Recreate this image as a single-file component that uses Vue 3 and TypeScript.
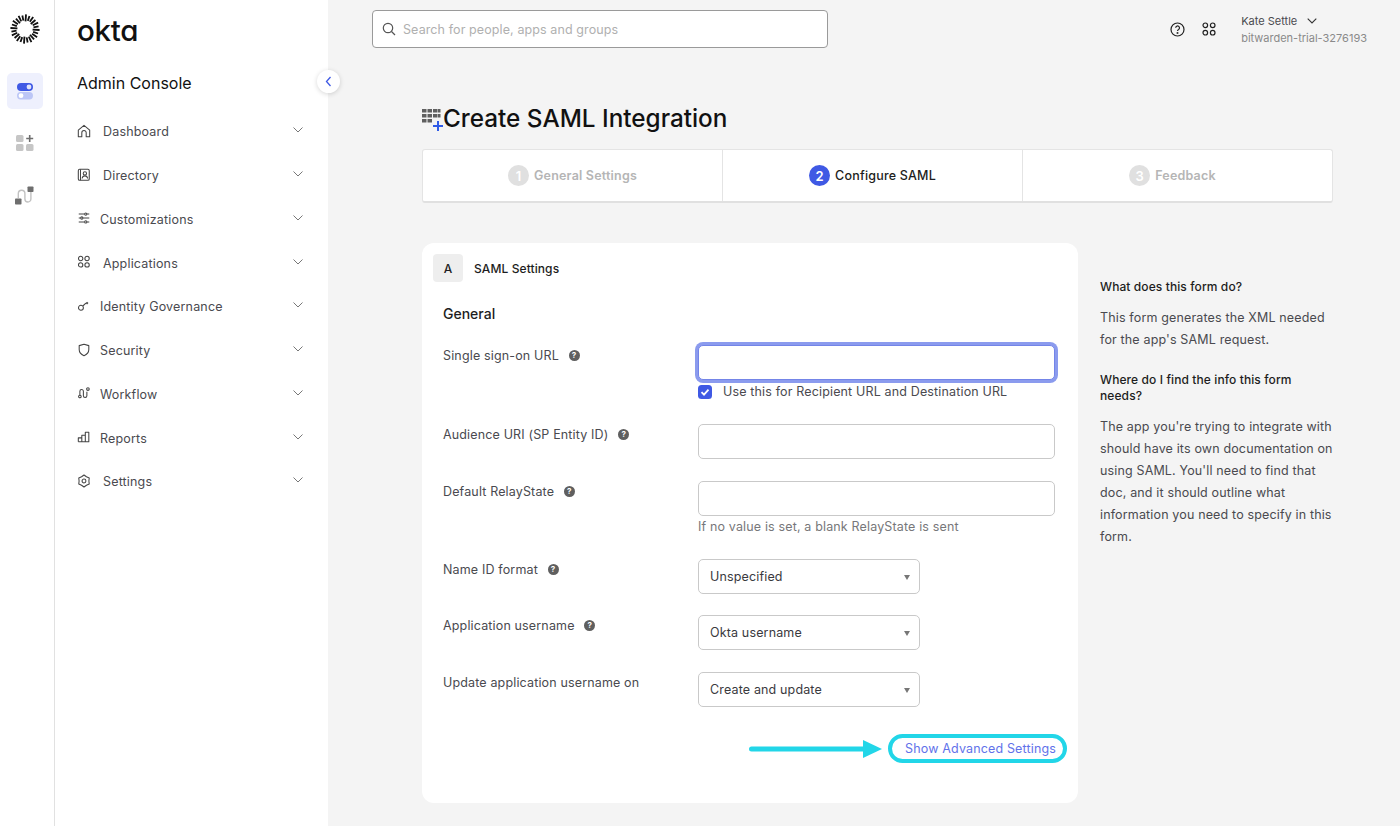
<script setup lang="ts">
interface NavItem { label: string; icon: string; gap: number }
const nav: NavItem[] = [
  { label: 'Dashboard', icon: 'home', gap: 12 },
  { label: 'Directory', icon: 'dir', gap: 12 },
  { label: 'Customizations', icon: 'sliders', gap: 9 },
  { label: 'Applications', icon: 'apps', gap: 12 },
  { label: 'Identity Governance', icon: 'key', gap: 9 },
  { label: 'Security', icon: 'shield', gap: 9 },
  { label: 'Workflow', icon: 'flow', gap: 9 },
  { label: 'Reports', icon: 'reports', gap: 9 },
  { label: 'Settings', icon: 'gear', gap: 12 },
]
const rays = Array.from({ length: 24 }, (_, i) => i * 15 + 4)
const gear = (() => {
  const pts: string[] = []
  for (let i = 0; i < 12; i++) {
    const a = (i * 30 * Math.PI) / 180
    const r = i % 2 === 0 ? 6.9 : 5.6
    pts.push(`${(8 + r * Math.sin(a)).toFixed(2)} ${(8 - r * Math.cos(a)).toFixed(2)}`)
  }
  return 'M' + pts.join('L') + 'Z'
})()
const steps = [
  { n: 1, label: 'General Settings', active: false },
  { n: 2, label: 'Configure SAML', active: true },
  { n: 3, label: 'Feedback', active: false },
]
</script>

<template>
  <div class="page">
    <aside class="rail">
      <svg class="logo" width="30" height="30" viewBox="0 0 30 30">
        <line v-for="(r, i) in rays" :key="r" x1="15" :y1="i % 2 ? 1.2 : 0.4" x2="15" :y2="i % 3 === 0 ? 7.4 : 6.4" stroke="#111" stroke-width="1.8" :transform="`rotate(${r} 15 15)`" />
      </svg>
      <div class="rail-btn active">
        <svg width="18" height="20" viewBox="0 0 18 20">
          <rect x="1" y="2" width="16" height="8" rx="4" fill="#3f59e4" />
          <circle cx="13" cy="6" r="2.4" fill="#dfe3fb" />
          <rect x="1" y="11" width="16" height="7.5" rx="3.7" fill="#bcc6f6" />
          <circle cx="5" cy="14.7" r="2.4" fill="#fff" />
        </svg>
      </div>
      <svg class="rail-ic first" width="18" height="18" viewBox="0 0 18 18">
        <rect x="0" y="1" width="7.5" height="7" rx="1.5" fill="#c6c6c6" />
        <rect x="0" y="10" width="7.5" height="7" rx="1.5" fill="#c6c6c6" />
        <rect x="10" y="10" width="7.5" height="7" rx="1.5" fill="#c6c6c6" />
        <path d="M13.7 1v7M10.2 4.5h7" stroke="#6e6e6e" stroke-width="1.6" />
      </svg>
      <svg class="rail-ic" width="20" height="20" viewBox="0 0 20 20">
        <rect x="0" y="12.5" width="6.5" height="6" rx=".8" fill="#6e6e6e" />
        <rect x="12.5" y="0.5" width="6" height="5.5" rx=".8" fill="#6e6e6e" />
        <path d="M3.3 12V7.5a3.3 3.3 0 0 1 6.6 0v5.5a3 3 0 0 0 6 0V6" fill="none" stroke="#c2c2c2" stroke-width="1.4" />
      </svg>
    </aside>

    <aside class="side">
      <div class="okta">okta</div>
      <div class="console">Admin Console</div>
      <nav class="nav">
        <div v-for="item in nav" :key="item.label" class="nav-item">
          <svg class="nav-ic" width="14" height="14" viewBox="0 0 16 16" fill="none" stroke="#444" stroke-width="1.2">
            <template v-if="item.icon === 'home'">
              <path d="M1.5 7 8 1.5 14.5 7v7.5h-4V10a2.5 2.5 0 0 0-5 0v4.5h-4z" stroke-linejoin="round" />
            </template>
            <template v-else-if="item.icon === 'dir'">
              <rect x="1.5" y="1.5" width="12.5" height="12.5" rx="1.5" />
              <path d="M4 1.5v12.5" />
              <circle cx="9" cy="6.2" r="1.9" />
              <path d="M5.8 12c.4-2 1.6-3 3.2-3s2.8 1 3.2 3" />
            </template>
            <template v-else-if="item.icon === 'sliders'">
              <path d="M2 3.5h6.5M11.5 3.5h2.5M2 8h2M7 8h7M2 12.5h6.5M11.5 12.5h2.5" />
              <circle cx="10" cy="3.5" r="1.3" /><circle cx="5.5" cy="8" r="1.3" /><circle cx="10" cy="12.5" r="1.3" />
            </template>
            <template v-else-if="item.icon === 'apps'">
              <circle cx="4.2" cy="4" r="2.5" /><circle cx="11.5" cy="4" r="2.5" /><circle cx="4.2" cy="11.3" r="2.5" /><circle cx="11.5" cy="11.3" r="2.5" />
            </template>
            <template v-else-if="item.icon === 'key'">
              <circle cx="4.5" cy="10" r="2.8" />
              <path d="m6.6 8 3.6-3.4" />
              <path d="m11.5 3 1.6 1.6-1.6 1.6-1.6-1.6z" fill="#444" stroke="none" />
            </template>
            <template v-else-if="item.icon === 'shield'">
              <path d="M2.5 3 8 1.5 13.5 3v4.5c0 3.3-2.2 5.7-5.5 7-3.3-1.3-5.5-3.7-5.5-7z" stroke-linejoin="round" />
            </template>
            <template v-else-if="item.icon === 'flow'">
              <circle cx="3.3" cy="12" r="1.5" /><circle cx="12.5" cy="3.5" r="1.5" />
              <path d="M3.3 10.5V6a2 2 0 0 1 4 0v5a2 2 0 0 0 4 0V6.5" />
            </template>
            <template v-else-if="item.icon === 'reports'">
              <path d="M1.5 13.5V9h4v4.5M5.5 13.5V6h4v7.5M9.5 13.5V2.5h4v11H1.5" stroke-linejoin="round" />
            </template>
            <template v-else>
              <path :d="gear" stroke-linejoin="round" />
              <circle cx="8" cy="8" r="2.2" />
            </template>
          </svg>
          <span class="nav-label" :style="{ marginLeft: item.gap + 'px' }">{{ item.label }}</span>
          <svg class="chev" width="10" height="6" viewBox="0 0 10 6" fill="none" stroke="#777" stroke-width="1"><path d="m.5.5 4.500 4.500L9.500.5" /></svg>
        </div>
      </nav>
      <div class="collapse">
        <svg width="7" height="11" viewBox="0 0 7 11" fill="none" stroke="#3f59e4" stroke-width="1.3"><path d="M5.500 1 1.500 5.500l4 4.500" /></svg>
      </div>
    </aside>

    <main class="main">
      <header class="top">
        <div class="search">
          <svg width="14" height="14" viewBox="0 0 14 14" fill="none" stroke="#555" stroke-width="1.2"><circle cx="6" cy="6" r="4.7" /><path d="m9.500 9.500 3.500 3.500" /></svg>
          <span>Search for people, apps and groups</span>
        </div>
        <div class="top-right">
          <svg width="15" height="15" viewBox="0 0 15 15" fill="none" stroke="#222" stroke-width="1.2">
            <circle cx="7.5" cy="7.5" r="6.5" />
            <path d="M5.7 5.8a1.9 1.9 0 1 1 2.9 1.7c-.7.4-1.100.8-1.100 1.500" />
            <circle cx="7.5" cy="11" r=".4" />
          </svg>
          <svg class="apps" width="14" height="14" viewBox="0 0 14 14" fill="none" stroke="#222" stroke-width="1.2">
            <circle cx="3.3" cy="3.3" r="2.3" /><circle cx="10.7" cy="3.3" r="2.3" /><circle cx="3.3" cy="10.7" r="2.3" /><circle cx="10.7" cy="10.7" r="2.3" />
          </svg>
          <div class="user">
            <div class="uname">Kate Settle
              <svg width="10" height="6" viewBox="0 0 10 6" fill="none" stroke="#333" stroke-width="1.1"><path d="m.7.7 4.300 4.300L9.300.7" /></svg>
            </div>
            <div class="org">bitwarden-trial-3276193</div>
          </div>
        </div>
      </header>

      <div class="content">
        <h1 class="title">
          <svg width="22" height="23" viewBox="0 0 22 23">
            <g fill="#5f5f5f">
              <rect x="0" y="0" width="4.500" height="3.500" /><rect x="5.500" y="0" width="4.500" height="3.500" /><rect x="11" y="0" width="4.500" height="3.500" /><rect x="16" y="0" width="2.500" height="3.500" />
              <rect x="0" y="5" width="4.500" height="3.500" /><rect x="5.500" y="5" width="4.500" height="3.500" /><rect x="11" y="5" width="4.500" height="3.500" /><rect x="16" y="5" width="2.500" height="3.500" />
              <rect x="0" y="10" width="4.500" height="3.500" /><rect x="5.500" y="10" width="4.500" height="3.500" />
            </g>
            <path d="M16 12v10M11 17h10" stroke="#2f5be7" stroke-width="2" />
          </svg>
          <span>Create SAML Integration</span>
        </h1>

        <div class="wizard">
          <div v-for="s in steps" :key="s.n" class="step" :class="{ on: s.active }">
            <span class="num">{{ s.n }}</span>
            <span>{{ s.label }}</span>
          </div>
        </div>

        <div class="columns">
          <section class="card">
            <div class="card-head">
              <span class="letter">A</span>
              <span class="card-title">SAML Settings</span>
            </div>
            <h2 class="general">General</h2>

            <div class="row r1">
              <div class="lab">Single sign-on URL <i class="q">?</i></div>
              <div class="ctl">
                <div class="input focus"></div>
                <label class="chk">
                  <svg width="14" height="14" viewBox="0 0 14 14"><rect width="14" height="14" rx="3.500" fill="#3f59e4" /><path d="m3.500 7.200 2.500 2.500 4.500-5" fill="none" stroke="#fff" stroke-width="1.800" /></svg>
                  Use this for Recipient URL and Destination URL
                </label>
              </div>
            </div>
            <div class="row r2">
              <div class="lab">Audience URI (SP Entity ID) <i class="q">?</i></div>
              <div class="ctl"><div class="input"></div></div>
            </div>
            <div class="row r3">
              <div class="lab">Default RelayState <i class="q">?</i></div>
              <div class="ctl">
                <div class="input"></div>
                <div class="hint">If no value is set, a blank RelayState is sent</div>
              </div>
            </div>
            <div class="row r4">
              <div class="lab">Name ID format <i class="q">?</i></div>
              <div class="ctl"><div class="select">Unspecified<b class="caret"></b></div></div>
            </div>
            <div class="row r5">
              <div class="lab">Application username <i class="q">?</i></div>
              <div class="ctl"><div class="select">Okta username<b class="caret"></b></div></div>
            </div>
            <div class="row r5">
              <div class="lab">Update application username on</div>
              <div class="ctl"><div class="select">Create and update<b class="caret"></b></div></div>
            </div>

            <div class="adv-row">
              <svg class="arrow" width="134" height="20" viewBox="0 0 134 20">
                <path d="M2.500 10h116" stroke="#22d6e8" stroke-width="5" stroke-linecap="round" />
                <path d="M114 1l19 9-19 9z" fill="#22d6e8" />
              </svg>
              <a class="adv">Show Advanced Settings</a>
            </div>
          </section>

          <aside class="help">
            <h3>What does this form do?</h3>
            <p>This form generates the XML needed for the app's SAML request.</p>
            <h3>Where do I find the info this form needs?</h3>
            <p>The app you're trying to integrate with should have its own documentation on using SAML. You'll need to find that doc, and it should outline what information you need to specify in this form.</p>
          </aside>
        </div>
      </div>
    </main>
  </div>
</template>

<style>
html, body { margin: 0; height: 100%; background: #f4f4f4; }
</style>

<style scoped>
.page { display: flex; height: 826px; overflow: hidden; font-family: Inter, "Liberation Sans", sans-serif; color: #1d1d21; background: #f4f4f4; }
.rail { width: 54px; flex: none; background: #fff; border-right: 1px solid #e1e1e1; display: flex; flex-direction: column; align-items: center; }
.logo { margin-top: 14px; margin-left: -5px; }
.rail-btn { width: 36px; height: 36px; margin-top: 29px; margin-left: -5px; border-radius: 5px; background: #eef0fd; display: flex; align-items: center; justify-content: center; }
.rail-ic { margin-left: -5px; margin-top: 34px; }
.rail-ic.first { margin-top: 25px; }
.side { width: 273px; flex: none; background: #fff; position: relative; box-sizing: border-box; padding-left: 22px; }
.okta { font-size: 29.5px; font-weight: 500; line-height: 36px; margin-top: 12px; letter-spacing: -0.3px; color: #111; font-feature-settings: "cv11"; }
.console { font-size: 16px; font-weight: 400; line-height: 20px; margin-top: 25px; color: #111; }
.nav { margin-top: 17px; }
.nav-item { height: 43.75px; display: flex; align-items: center; font-size: 12.5px; letter-spacing: 0.17px; color: #4a4a4f; padding-right: 25px; }
.nav-ic { flex: none; margin-top: -2px; }
.nav-label { flex: 1; }
.chev { margin-top: -3px; }
.collapse { position: absolute; right: -12px; top: 70px; width: 23px; height: 23px; border-radius: 50%; background: #fff; box-shadow: 0 1px 5px rgba(0,0,0,.16); display: flex; align-items: center; justify-content: center; }
.main { flex: 1; min-width: 0; display: flex; flex-direction: column; }
.top { height: 58px; display: flex; align-items: flex-start; padding: 10px 33px 0 44px; justify-content: space-between; }
.search { width: 456px; height: 38px; box-sizing: border-box; background: #fff; border: 1px solid #9a9a9a; border-radius: 4px; display: flex; align-items: center; gap: 7px; padding-left: 9px; font-size: 12.5px; letter-spacing: .1px; color: #b0b0b0; }
.top-right { display: flex; align-items: center; height: 38px; }
.apps { margin-left: 17px; }
.user { margin-left: 25px; font-size: 11px; line-height: 17px; margin-top: 1px; }
.uname { color: #4a4a4f; display: flex; align-items: center; gap: 10px; }
.org { color: #8a8a8a; }
.content { padding: 0 67px 0 94px; }
.title { margin: 33px 0 0; height: 34px; display: flex; align-items: center; font-size: 24.3px; font-weight: 500; color: #111; line-height: 34px; }
.title svg { margin-right: -1px; margin-top: 5px; }
.wizard { margin-top: 14px; height: 54px; box-sizing: border-box; display: flex; background: #fff; border: 1px solid #e4e4e4; border-bottom: 2px solid #e0e0e0; border-radius: 3px; }
.step { flex: 0 0 300px; box-sizing: border-box; display: flex; align-items: center; justify-content: center; gap: 5px; font-size: 12.5px; font-weight: 600; color: #b5b5b5; letter-spacing: .2px; }
.step:first-child { flex-basis: 299px; }
.step + .step { border-left: 1px solid #e4e4e4; }
.step.on { color: #1d1d21; font-weight: 500; }
.num { width: 21px; height: 21px; border-radius: 50%; background: #e0e0e0; color: #fff; display: flex; align-items: center; justify-content: center; font-size: 13px; font-weight: 600; }
.on .num { background: #3f59e4; }
.columns { display: flex; margin-top: 40px; gap: 22px; }
.card { width: 656px; height: 560px; flex: none; box-sizing: border-box; background: #fff; border-radius: 12px; padding: 11px 11px 0 21px; }
.card-head { display: flex; align-items: center; margin-left: -10px; height: 28px; }
.letter { width: 30px; height: 28px; background: #eeeeee; border-radius: 4px; display: flex; align-items: center; justify-content: center; font-size: 12px; font-weight: 500; }
.card-title { margin-left: 11px; font-size: 12px; font-weight: 500; letter-spacing: .1px; }
.general { margin: 22px 0 0; font-size: 14px; font-weight: 500; line-height: 20px; color: #1d1d21; }
.row { display: flex; }
.r1 { margin-top: 21px; height: 79px; }
.r2 { height: 57px; }
.r3 { height: 78px; }
.r4 { height: 56px; }
.r5 { height: 56.5px; }
.lab { width: 255px; flex: none; font-size: 12.5px; letter-spacing: .15px; color: #4a4a4f; line-height: 22px; display: flex; align-items: flex-start; white-space: pre; }
.q { width: 11px; height: 11px; margin: 5px 0 0 6px; border-radius: 50%; background: #5f5f5f; color: #fff; font: 700 8px/11px Inter, sans-serif; text-align: center; letter-spacing: 0; }
.ctl { flex: none; width: 357px; }
.input { height: 35px; box-sizing: border-box; background: #fff; border: 1px solid #c9c9c9; border-radius: 5px; }
.input.focus { border: 1px solid #7485e8; box-shadow: 0 0 0 3px #8b9bee; }
.chk { display: flex; align-items: center; gap: 11px; margin-top: 3px; font-size: 12.5px; line-height: 17px; letter-spacing: .15px; color: #4a4a4f; }
.hint { font-size: 12.5px; color: #77777a; letter-spacing: .15px; line-height: 21px; }
.select { position: relative; width: 222px; height: 35px; box-sizing: border-box; border: 1px solid #c9c9c9; border-radius: 5px; background: #fff; padding-left: 11px; font-size: 12.5px; letter-spacing: .15px; line-height: 33px; color: #3a3a3e; }
.caret { position: absolute; right: 9px; top: 15px; border: 3px solid transparent; border-top: 5px solid #777; border-bottom: 0; }
.adv-row { display: flex; align-items: center; justify-content: flex-end; margin-top: 5px; position: relative; height: 30px; }
.arrow { position: absolute; left: 306px; top: 6px; }
.adv { box-sizing: border-box; width: 179px; height: 29px; border: 4px solid #22d6e8; border-radius: 15px; color: #6272ea; font-size: 12.5px; letter-spacing: .15px; display: flex; align-items: center; justify-content: flex-end; padding-right: 7px; }
.help { width: 234px; flex: none; padding-top: 36px; font-size: 12.5px; letter-spacing: .15px; color: #4a4a4f; }
.help h3 { margin: 0; font-size: 12px; font-weight: 500; color: #1d1d21; line-height: 16px; letter-spacing: .1px; }
.help p { margin: 12px 0 21px; line-height: 22px; }
</style>
